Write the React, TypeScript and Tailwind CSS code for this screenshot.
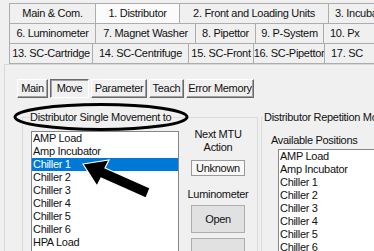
const topTabs = [
  [
    { label: "Main & Com.", w: "w-[87px]" },
    { label: "1. Distributor", w: "w-[85px]", active: true },
    { label: "2. Front and Loading Units", w: "w-[150px]" },
    { label: "3. Incubator", w: "w-[80px]", cut: true },
  ],
  [
    { label: "6. Luminometer", w: "w-[87px]" },
    { label: "7. Magnet Washer", w: "w-[101px]" },
    { label: "8. Pipettor", w: "w-[61px]" },
    { label: "9. P-System", w: "w-[69px]" },
    { label: "10. Px", w: "w-[80px]", cut: true },
  ],
  [
    { label: "13. SC-Cartridge", w: "w-[84px]" },
    { label: "14. SC-Centrifuge", w: "w-[97px]" },
    { label: "15. SC-Front", w: "w-[66px]" },
    { label: "16. SC-Pipettor", w: "w-[72px]" },
    { label: "17. SC", w: "w-[80px]", cut: true },
  ],
];

const subTabs = [
  { label: "Main", w: "w-[31px]" },
  { label: "Move", w: "w-[39px]", active: true },
  { label: "Parameter", w: "w-[56px]" },
  { label: "Teach", w: "w-[35px]" },
  { label: "Error Memory", w: "w-[68px]" },
];

const positions = [
  "AMP Load",
  "Amp Incubator",
  "Chiller 1",
  "Chiller 2",
  "Chiller 3",
  "Chiller 4",
  "Chiller 5",
  "Chiller 6",
  "HPA Load",
  "HPA Unload",
];

const ListBox = ({ selected, className }: { selected?: string; className: string }) => (
  <div className={`shrink-0 border border-[#828790] bg-white overflow-hidden ${className}`}>
    {positions.map((p) => (
      <div
        key={p}
        className={`h-[13px] leading-[13px] pl-[1px] whitespace-nowrap ${
          p === selected ? "bg-[#0078d7] text-white" : ""
        }`}
      >
        {p}
      </div>
    ))}
  </div>
);

export default function App() {
  return (
    <div className="relative w-[374px] h-[251px] overflow-hidden bg-[#f0f0f0] text-[#111] text-[11px] tracking-[-0.3px] font-['Liberation_Sans',Arial,sans-serif]">
      {/* TOP TABS */}
      <div className="pt-[3px] pl-[9px] flex flex-col">
        {topTabs.map((row, i) => (
          <div key={i} className={`flex h-[21px] ${i > 0 ? "-mt-px" : ""}`}>
            {row.map((t, j) => (
              <div
                key={t.label}
                className={`${t.w} shrink-0 flex items-center whitespace-nowrap border border-[#adadad] ${
                  t.cut ? "justify-start pl-[6px]" : "justify-center"
                } ${j > 0 ? "-ml-px" : ""} ${t.active ? "bg-[#fbfbfb] border-b-transparent" : "bg-[#f0f0f0]"}`}
              >
                {t.label}
              </div>
            ))}
          </div>
        ))}
      </div>

      {/* TAB PAGE */}
      <div className="ml-[4px] h-full border-l border-t border-[#d9d9d9]">
        {/* SUB TABS */}
        <div className="mt-[14px] ml-[12px] flex gap-[2px]">
          {subTabs.map((t) => (
            <div
              key={t.label}
              className={`${t.w} h-[19px] shrink-0 flex items-center justify-center whitespace-nowrap border ${
                t.active
                  ? "border-t-[#696969] border-l-[#696969] border-r-white border-b-white shadow-[inset_1px_1px_0_#a0a0a0]"
                  : "border-t-white border-l-white border-r-[#696969] border-b-[#696969] shadow-[inset_-1px_-1px_0_#a0a0a0]"
              }`}
            >
              {t.label}
            </div>
          ))}
        </div>

        {/* GROUPS */}
        <div className="mt-[13px] flex">
          <fieldset className="ml-[17px] w-[236px] h-[200px] shrink-0 border border-[#dcdcdc]">
            <legend className="ml-[6px] px-[1px] leading-[13px]">Distributor Single Movement to</legend>
            <div className="flex mt-[4px] ml-[8px]">
              <ListBox selected="Chiller 1" className="w-[148px] h-[130px] mt-[3px]" />
              <div className="w-[78px] flex flex-col items-center">
                <div className="text-center leading-[13px]">
                  Next MTU
                  <br />
                  Action
                </div>
                <div className="mt-[6px] w-[54px] h-[16px] flex items-center justify-center border border-[#9a9a9a] bg-[#f8f8f8]">
                  Unknown
                </div>
                <div className="mt-[12px] leading-[13px]">Luminometer</div>
                <button className="mt-[4px] w-[54px] h-[28px] border border-[#adadad] bg-[#e1e1e1]">Open</button>
                <button className="mt-[5px] w-[54px] h-[28px] border border-[#adadad] bg-[#e1e1e1]" />
              </div>
            </div>
          </fieldset>

          <fieldset className="ml-[3px] w-[200px] h-[200px] shrink-0 border border-[#dcdcdc]">
            <legend className="ml-[1px] px-[1px] leading-[13px] whitespace-nowrap">
              Distributor Repetition Movement
            </legend>
            <div className="mt-[10px] ml-[9px] leading-[13px]">Available Positions</div>
            <ListBox className="mt-[2px] ml-[16px] w-[150px] h-[130px]" />
          </fieldset>
        </div>
      </div>

      {/* ANNOTATIONS */}
      <svg className="absolute inset-0 pointer-events-none" width="374" height="251" viewBox="0 0 374 251">
        <ellipse cx="101" cy="117" rx="86" ry="12.5" fill="none" stroke="#000" strokeWidth="3" />
        <polygon
          points="83,164 109,160 105,168 150,188 146,198 101,178 97,186"
          fill="#000"
          stroke="#fff"
          strokeWidth="1.2"
          strokeLinejoin="miter"
        />
      </svg>
    </div>
  );
}
